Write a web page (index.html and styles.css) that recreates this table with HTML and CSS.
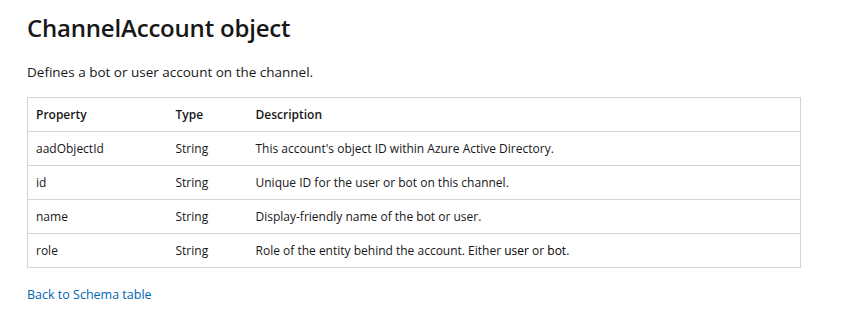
FILE: index.html
```html
<!DOCTYPE html>
<html lang="en">
<head>
  <meta charset="UTF-8">
  <title>ChannelAccount object</title>
  <link rel="stylesheet" href="styles.css">
</head>
<body>
  <main class="doc">
    <h1>ChannelAccount object</h1>
    <p class="lead">Defines a bot or user account on the channel.</p>

    <table class="schema">
      <thead>
        <tr>
          <th class="col-prop">Property</th>
          <th class="col-type">Type</th>
          <th>Description</th>
        </tr>
      </thead>
      <tbody>
        <tr>
          <td>aadObjectId</td>
          <td>String</td>
          <td>This account's object ID within Azure Active Directory.</td>
        </tr>
        <tr>
          <td>id</td>
          <td>String</td>
          <td>Unique ID for the user or bot on this channel.</td>
        </tr>
        <tr>
          <td>name</td>
          <td>String</td>
          <td>Display-friendly name of the bot or user.</td>
        </tr>
        <tr>
          <td>role</td>
          <td>String</td>
          <td>Role of the entity behind the account. Either <span class="val">user</span> or <span class="val">bot</span>.</td>
        </tr>
      </tbody>
    </table>

    <a class="back" href="#">Back to Schema table</a>
  </main>
</body>
</html>
```

FILE: styles.css
```css
:root {
  --text: #171717;
  --border: #d4d4d4;
  --link: #0065b3;
}
* { box-sizing: border-box; }
body {
  margin: 0;
  background: #fff;
  color: var(--text);
  font-family: "Open Sans", "Noto Sans", sans-serif;
  font-size: 14px;
}
.doc {
  padding: 10px 59px 0 27px;
  display: flex;
  flex-direction: column;
  align-items: flex-start;
}
h1 {
  margin: 0;
  font-size: 24px;
  font-weight: 600;
  letter-spacing: -0.2px;
  line-height: 36px;
}
.lead {
  margin: 15px 0 0;
  font-size: 13.5px;
  line-height: 22px;
}
.schema {
  margin-top: 14px;
  width: 774px;
  border-collapse: collapse;
  border: 1px solid var(--border);
}
.schema th,
.schema td {
  text-align: left;
  padding: 0 8px;
  height: 34px;
  line-height: 18px;
  border-top: 1px solid var(--border);
  font-size: 12px;
}
.schema th { font-weight: 600; }
.schema .col-prop { width: 140px; }
.schema .col-type { width: 80px; }
.schema .val { color: #000; font-weight: 500; }
.back {
  margin-top: 17px;
  font-size: 12.5px;
  color: var(--link);
  text-decoration: none;
  line-height: 20px;
}
```
